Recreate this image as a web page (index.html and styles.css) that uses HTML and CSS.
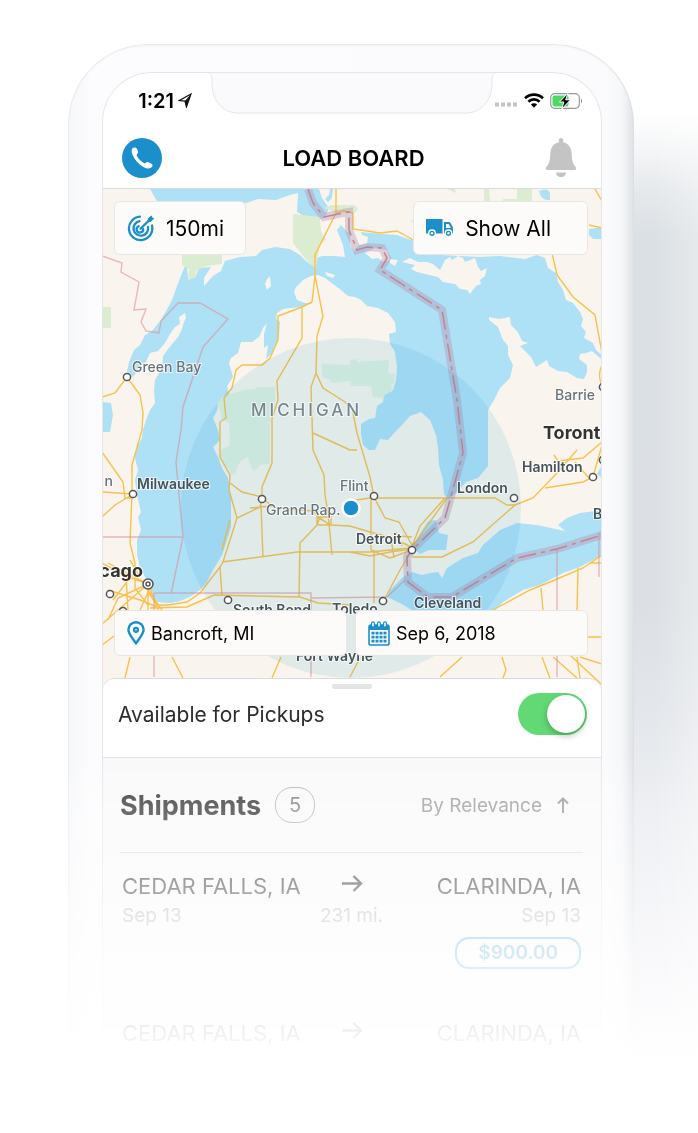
FILE: index.html
```html
<!DOCTYPE html>
<html lang="en">
<head>
<meta charset="utf-8">
<meta name="viewport" content="width=device-width, initial-scale=1">
<title>Load Board</title>
<link rel="stylesheet" href="styles.css">
</head>
<body>
<div class="stage">
  <main class="phone">
    <div class="screen">
      <div class="status">
        <div class="status-left">
          <span class="time">1:21</span>
          <svg width="14" height="15" viewBox="0 0 14 15" aria-hidden="true"><path d="M13 1 1 7.600l6 .5 1.400 5.900z" fill="none" stroke="#111" stroke-width="1.200"/><path d="M13 1 7 8.100l1.400 5.900z" fill="#111"/></svg>
        </div>
        <svg class="notch" viewBox="0 0 282 42" preserveAspectRatio="none" aria-hidden="true"><path d="M-6-1C-1-1 1 2 1 9c0 19 10 31 27 31h226c17 0 27-12 27-31 0-7 2-10 7-10" fill="#fafafc" stroke="#e3e6ea"/></svg>
        <div class="status-right">
          <svg width="24" height="18" viewBox="0 0 24 18" aria-hidden="true"><path d="M1 12.500h4M7 12.500h4M13 12.500h4M19 12.500h4" stroke="#c4c4c4" stroke-width="4"/></svg>
          <svg width="20" height="15" viewBox="0 0 20 15" aria-hidden="true"><g fill="none" stroke="#000" stroke-width="2.700"><path d="M1 5.200a13 13 0 0 1 18 0"/><path d="M4.400 8.700a8 8 0 0 1 11.200 0"/></g><path d="m10 14.800-3.100-3.200a4.400 4.400 0 0 1 6.200 0z"/></svg>
          <svg width="33" height="16" viewBox="0 0 33 16" aria-hidden="true"><rect x=".7" y=".7" width="28.600" height="14.600" rx="4" fill="#fff" stroke="#999" stroke-width="1.200"/><path d="M31 5.500q2 2.500 0 5" fill="#888"/><rect x="2.500" y="2.500" width="16" height="11" rx="2" fill="#4cd964"/><path d="M18 0 9.500 9h4.300l-2 7 8.700-9.200h-4.800z" fill="#000" stroke="#fff" stroke-width="1"/></svg>
        </div>
      </div>

      <header class="topbar">
        <button class="icon-btn call" aria-label="Call">
          <svg width="40" height="40" viewBox="0 0 40 40" aria-hidden="true"><path d="M10.800 10c1.700-1.100 3.600-.6 4.300 1l.9 2.600c.3 1-.1 1.700-.8 2.400-.6.600-.6 1.400-.1 2.300 1.500 2.700 3.700 4.900 6.500 6.700.9.500 1.600.4 2.200-.2.800-.8 1.600-1 2.600-.6l2.700 1.200c1.600.7 1.900 2.400.7 3.700-1.700 1.800-4.600 1.900-8.400-.2-5-2.800-8.900-7-11-12.300-1.100-3-1-5.300.4-6.600z" fill="#fff"/></svg>
        </button>
        <h1>LOAD BOARD</h1>
        <button class="icon-btn" aria-label="Notifications">
          <svg width="32" height="40" viewBox="0 0 32 40" aria-hidden="true"><path fill="#c4c4c4" d="M16 0c1.500 0 2.400 1 2.200 2.500L18 4.300c5.700 1.200 8.500 5.600 8.700 11.600.2 6 .8 9.300 3.900 13 1.200 1.500.8 3.100-1.100 3.100h-27C.6 32 .2 30.400 1.400 28.900c3.100-3.700 3.700-7 3.900-13C5.500 9.900 8.300 5.500 14 4.300l-.2-1.800C13.600 1 14.500 0 16 0zM11 34.500h10c0 2.500-2 4.500-5 4.500s-5-2-5-4.500z"/></svg>
        </button>
      </header>

      <section class="map" aria-label="Map">
        <svg class="map-art" viewBox="103 189 498 501" preserveAspectRatio="xMidYMin slice">
          <rect x="103" y="189" width="498" height="501" fill="#f9f5ee"/>
          <g fill="#aee0f6">
            <path d="M150 189l8 14h88l12-4 18 1 14-5 8-2-1 19 7 4 12 3 9-1 4-10-7-10-3-9z"/>
            <path d="M330 189l-1 6-4 4 3 3 4-4 1-9z"/>
            <path d="M127 371L129 362 134 350 140 345 145 335 152 331 160 321 166 311 172 300 177 286 184 268 187 264 188 280 196 276 199 268 211 267 204 278 204 286 213 276 221 271 225 261 240 257 256 256 262 250 275 247 290 249 300 255 307 262 315 267 317 258 322 256 333 256 345 257 343 245 337 230 341 225 347 232 352 231 358 232 397 235 417 242 420 254 480 257 500 256 525 259 537 255 545 258 548 268 556 273 558 282 563 290 566 300 573 303 580 312 583 319 581 326 586 332 584 338 593 343 596 350 602 355 602 360 592 351 586 353 580 354 579 359 587 365 587 372 584 379 577 378 567 372 558 371 549 366 547 360 536 367 531 357 527 353 520 346 528 343 522 341 518 332 511 325 510 317 499 319 489 317 489 320 498 327 503 340 508 346 508 355 513 365 510 378 500 388 494 400 488 410 488 466 478 478 466 482 456 493 448 500 444 494 443 480 439 465 438 448 436 435 430 420 421 412 410 416 402 425 395 432 388 440 380 439 375 450 369 450 363 445 361 434 361 424 369 419 375 418 377 406 383 402 384 395 393 390 396 380 397 367 395 352 390 344 389 334 396 332 395 322 388 313 378 308 367 306 361 300 355 297 348 296 341 290 333 284 325 278 318 275 311 276 303 280 296 287 294 292 297 300 305 303 312 303 303 307 290 308 283 309 277 313 276 319 280 322 279 336 272 353 266 359 268 345 264 348 264 334 267 323 263 328 259 337 252 342 241 342 238 353 231 358 229 363 233 377 227 386 229 394 225 400 218 404 217 411 213 418 218 430 220 440 213 447 218 457 222 468 228 478 231 497 231 527 227 540 222 555 213 570 207 582 200 590 190 597 180 601 170 603 157 602 153 595 150 587 145 577 140 567 137 555 137 540 141 530 138 517 141 512 137 495 135 480 138 470 134 455 138 445 142 438 143 430 146 420 150 410 155 403 154 390 155 380 162 368 163 356 168 349 173 343 178 337 182 329 184 322 186 318 185 313 179 317 180 324 175 327 170 334 165 343 158 351 150 353 146 362 140 367 133 377Z"/>
            <path d="M387 597l3-7 13-13 9-5 10 3 8-2 8-1 4 6 5-10 16-10 15-5 5-8 17-15 17-7 20 2 28 6-7-6 9-7 13-5 22-3v45l-22 12-17 6-23 12-17 5-20 12-10 10h-78l-15-9z"/>
            <path d="M421 532l7-11 8-1 3 13 9 2-2 15-17 0-9 4-8-7z"/>
            <path d="M103 402l8 1 2 12-3 17h-7zM539 191q9-4 11 2v7q-9 1-11-9zM589 229l13-2v12l-9 0-4-4zM597 474l5-9v13z"/>
          </g>
          <g fill="#f9f5ee">
            <path d="M402 262l8-4 8 4 9 0 6 2 7 6 5-10 5-3 2 3 6-4 5 2 2 4 10-4 3 9 3 4 6-3-2 8-5 4 1 4-5 2-6 8-3-4-7-1-5-5-12-2-5-5-13-3-8-2-6-3 4-4z"/>
            <path d="M365 253l10-5 12 2 3 10-7 2-5-4-6 1zM350 230l10 0 2 5 6 2-1 7-8 1-5 6-4-6zM390 259l8 1-3 6-5-3z"/>
            <path d="M267 279l3-3 1 10-4 4-2-6zM325 272l10 3-2 3-6-2z"/>
          </g>
          <g fill="#dcecd0">
            <path d="M293 214l27 3 1 14 5 9-6 4-4 24-8-6-15-19zM324 208l7-3h23l4 3-3 5-20-1zM182 255h40v9l-15 2-10 4-2 8-7 1 1-10-7-4zM102 307h9v21h-9zM503 205v-6h14v-10h15v16zM484 189h5l1 12-6 1zM350 208l7-1v4l-5 2zM410 222l7-5v6zM447 189h8l1 4z"/>
          </g>
          <g fill="#dff2df">
            <path d="M223 396l11-3 11-3 10-1 3-2 17 0v28l-5 2v47l-10 1-6 6-3-4-3-10-6 3-4 5-3 10-4-1-2-6-4-1-3-8-3-2 3-8 7-3 1-7-1-16-8-4v-7l-4-8z"/>
            <path d="M322 364l28 1 0-5 7-1 0 3 32-2-1 13 7 1-1 9-3 2 1 7-7 1-1 5-11-1-2-11-20 0-1-5-18 2-2-3-8-4z"/>
          </g>
          <g class="roads">
            <path d="M336 189v24l-21 42v21l8 40-6 20-1 37-5 14 2 63 11 25 1 20 3 18 4 42M316 373l7 15 22 14 7 6 5 25 13 44 4 20 11 21 14 4 13 23"/>
            <path d="M315 276l-3 26-10 5-24 9v24l-8 18-8 7h-20l-6 5-4 18-8 10 2 20-6 4v35l10 18-1 15 8 28M302 307v31l-25 43 1 19-6 18v45l-10 24v11l-2 9-23 11-7 22-7 22-3 5-20 26-13 9-19 3h-11l-9-13M261 505l2 52M222 562l38-5 37-5h73l40-4M220 567l2 28M150 608l37-1 27-12 86 2 18 6 32 2M299 597l1-54 17-18 3-8M263 499l12 9 38 3 7 7 10 7 20 1 20 6 23 6 18 9M230 483l12 9 20 5M230 520l-8 30M250 508l22-2M313 433l37 17 7 0M317 517h14v8h-14zM317 517l14 8"/>
            <path d="M350 501l20-3h125l12 7h8l18-7 24-25 20-23M515 505l-42 37-31 15h-30M447 498l-35 49M445 498l-25 28-8 20M371 498v52M374 550v53M412 550l-12 20-16 30M371 550l19 8 22-8M350 552l20 4 20-4 22-3M391 538l3 20M400 536l12 1M402 546l-6-14"/>
            <path d="M127 377l13 18 3 18-1 17-10 35v28l-2 50 5 20v25l13 17M127 377l-12 16-13 4M102 452l21 30 2 16h8M102 492l31 2-18 11-13 12M148 584l-40-21M148 584l-22-8-24-13M148 584l-30 14-10 22M148 584l-46 40M148 584v30M148 590l14 20M140 610l10-22 8 22M102 645l12-9M126 576l2 34M113 600l20-26M130 560l8 14M108 590l32 10 20 8"/>
            <path d="M336 213l8-2 9 2v16l27 4 17-2 20 11M552 253l5 22 16 22 22 18 7 38M595 189l7 12M589 225l13 3M602 365q-5 10 0 20"/>
            <path d="M545 488l38-6 10-5 9-32M554 455l4 6 25-3 19-16M575 462l14 16M602 555l-19 13-33 14-20 8-37 20M541 588l2 23M578 568l-1 43M588 637h14M590 563h12M440 677l22-20M502 657l4 13-3 8M542 657l8 21M553 657l24 21M577 657l3 21M580 657l22 7M130 657l-5 21M172 657l11 21M281 657l-9 21M360 658l-10 19M570 655l32 30"/>
          </g>
          <g class="states">
            <path d="M102 256l20 7-1 9 18 10-5 28 12-1-5 13 5 9 13 2 2-12 17-18h22l28 16-25 28-20 60-2 23-5 32 7 75-12 57M102 537h81M154 593h157v84M311 598l76-1 18-17M154 593v84M557 550v127M599 533v44"/>
          </g>
          <path class="border-band" d="M308 189l5 14 11 14 19-4 6-1v18l8 20 10-3 15 1 5 10-7 12 62 40 15 90 6 53-18 65-33 32-5 7 1 25 20 15h24l65-39 40-9 45-14"/>
          <path class="border-line" d="M308 189l5 14 11 14 19-4 6-1v18l8 20 10-3 15 1 5 10-7 12 62 40 15 90 6 53-18 65-33 32-5 7 1 25 20 15h24l65-39 40-9 45-14"/>
          <circle cx="351" cy="508" r="170" fill="#1b8fcb" fill-opacity=".11"/>
          <g class="towns">
            <circle cx="127" cy="377" r="3.600"/><circle cx="133" cy="494" r="3.600"/><circle cx="262" cy="499" r="3.600"/><circle cx="374" cy="496" r="3.600"/><circle cx="412" cy="550" r="3.600"/><circle cx="514" cy="498" r="3.600"/><circle cx="593" cy="477" r="3.600"/><circle cx="228" cy="600" r="3.600"/><circle cx="383" cy="601" r="3.600"/><circle cx="110" cy="594" r="3.600"/><circle cx="123" cy="611" r="3.600"/><circle cx="148" cy="584" r="5"/><circle cx="148" cy="584" r="2"/><circle cx="603" cy="387" r="3.600"/><circle cx="603" cy="460" r="3.600"/>
          </g>
          <g class="labels">
            <text x="132" y="372" class="soft">Green Bay</text>
            <text x="137" y="489">Milwaukee</text>
            <text x="266" y="515" class="soft">Grand Rap.</text>
            <text x="340" y="491" class="soft">Flint</text>
            <text x="356" y="544">Detroit</text>
            <text x="457" y="493">London</text>
            <text x="522" y="472">Hamilton</text>
            <text x="555" y="400" class="soft">Barrie</text>
            <text x="543" y="439" class="city">Toront</text>
            <text x="143" y="577" class="city" text-anchor="end">cago</text>
            <text x="113" y="486" class="soft" text-anchor="end">n</text>
            <text x="593" y="519">B</text>
            <text x="414" y="608">Cleveland</text>
            <text x="233" y="615">South Bend</text>
            <text x="332" y="614">Toledo</text>
            <text x="296" y="661">Fort Wayne</text>
            <text x="251" y="416" class="region">MICHIGAN</text>
          </g>
          <circle cx="351" cy="508" r="8.500" fill="#1b8fcb" stroke="#fff" stroke-width="2.500"/>
        </svg>
        <div class="map-row">
          <button class="chip chip-lg radius">
            <svg width="28" height="28" viewBox="0 0 28 28" fill="none" stroke="#1b8fcb" stroke-width="2.300" stroke-linecap="round" aria-hidden="true"><path d="M13 2.700A11.700 11.700 0 1 0 25 11.500"/><path d="M12.500 7.200A7.300 7.300 0 1 0 21 13"/><path d="m13.500 14.800 9.500-9.300"/><path d="M11.600 12.200a3.300 3.300 0 1 0 4.600 2.800"/><path d="m21 7.300.4-2.800L24.500 2l.2 2 2 .4-2.500 2.700z" fill="#1b8fcb" stroke-width="1"/></svg>
            150mi
          </button>
          <button class="chip chip-lg fleet">
            <svg width="28" height="18" viewBox="0 0 28 18" aria-hidden="true"><path d="M0 0h16.500v14.500H0zM18 3h4.500q1.500 0 2.200 1.300L27 8.500v6h-9z" fill="#1b8fcb"/><path d="M20 5h2.800l2 4H20z" fill="#fff"/><g fill="#1b8fcb" stroke="#fff" stroke-width="1.300"><circle cx="6" cy="14.300" r="3.300"/><circle cx="22.500" cy="14.300" r="3.300"/></g><circle cx="6" cy="14.300" r="1.200" fill="#fff"/><circle cx="22.500" cy="14.300" r="1.200" fill="#fff"/></svg>
            Show All
          </button>
        </div>
        <div class="map-row map-row-bottom">
          <button class="chip">
            <svg width="18" height="24" viewBox="0 0 18 24" aria-hidden="true"><path d="M9 1.300a7.500 7.500 0 0 0-7.600 7.500C1.400 13 5 16.500 9 22.300c4-5.800 7.600-9.300 7.600-13.500A7.500 7.500 0 0 0 9 1.300z" fill="none" stroke="#1b8fcb" stroke-width="2.400"/><circle cx="9" cy="8.800" r="2.300" fill="#1b8fcb" stroke="#1b8fcb" stroke-width="1.600"/><circle cx="9" cy="8.800" r=".8" fill="#fff"/></svg>
            Bancroft, MI
          </button>
          <button class="chip">
            <svg width="22" height="25" viewBox="0 0 22 25" aria-hidden="true"><path d="M2 4h18v20H2z" fill="#fff"/><path d="M1 9V5.500Q1 4 2.500 4h17Q21 4 21 5.500V9z" fill="#1b8fcb"/><rect x="1" y="4" width="20" height="20" rx="1.800" fill="none" stroke="#1b8fcb" stroke-width="1.600"/><g fill="#fff" stroke="#1b8fcb" stroke-width="1.200"><rect x="3.600" y=".8" width="2.800" height="5.400" rx="1.400"/><rect x="9.600" y=".8" width="2.800" height="5.400" rx="1.400"/><rect x="15.600" y=".8" width="2.800" height="5.400" rx="1.400"/></g><path d="M3.500 12.200h15M3.500 16.200h15M3.500 20.200h15" stroke="#1b8fcb" stroke-width="2.800" stroke-dasharray="3 1"/></svg>
            Sep 6, 2018
          </button>
        </div>
      </section>

      <section class="sheet">
        <div class="handle"></div>
        <div class="pickup">
          <label for="pickups">Available for Pickups</label>
          <input class="switch" type="checkbox" role="switch" id="pickups" checked>
        </div>
        <div class="shipments">
          <div class="ship-head">
            <h2>Shipments</h2>
            <span class="count">5</span>
            <button class="sort">By Relevance
              <svg width="12" height="16" viewBox="0 0 12 16" fill="none" stroke="currentColor" stroke-width="2" aria-hidden="true"><path d="M6 16V1.500M1 6.500l5-5 5 5"/></svg>
            </button>
          </div>
          <article class="load">
            <div class="from">CEDAR FALLS, IA<small>Sep 13</small></div>
            <div class="via"><svg width="22" height="17" viewBox="0 0 22 17" fill="none" stroke="currentColor" stroke-width="2.400" aria-hidden="true"><path d="M1 8.500h19M12.500 1l7.500 7.500-7.500 7.500"/></svg><small>231 mi.</small></div>
            <div class="to">CLARINDA, IA<small>Sep 13</small><span class="price">$900.00</span></div>
          </article>
          <article class="load">
            <div class="from">CEDAR FALLS, IA</div>
            <div class="via"><svg width="22" height="17" viewBox="0 0 22 17" fill="none" stroke="currentColor" stroke-width="2.400" aria-hidden="true"><path d="M1 8.500h19M12.500 1l7.500 7.500-7.500 7.500"/></svg></div>
            <div class="to">CLARINDA, IA</div>
          </article>
        </div>
      </section>
    </div>
  </main>
  <div class="shade"></div>
</div>
</body>
</html>
```
FILE: styles.css
```css
* { box-sizing: border-box; }

body {
  margin: 0;
  background: #fff;
  color: #000;
  font-family: Inter, "Liberation Sans", sans-serif;
}

button {
  margin: 0;
  padding: 0;
  border: 0;
  background: none;
  color: inherit;
  font: inherit;
}

svg { display: block; flex: none; }
h1, h2 { margin: 0; }

.stage {
  display: grid;
  grid-template-columns: minmax(0, 1fr) 64px;
  padding: 44px 0 72px 68px;
}

.phone {
  padding: 28px 32px 12px 34px;
  border-radius: 80px 80px 0 0;
  background: linear-gradient(90deg, #f6f7f9, #fcfcfe 24px, #fbfbfd calc(100% - 28px), #f6f7f9 calc(100% - 12px), #dfe2e6);
  box-shadow: inset 0 1px 2px #e3e5e8, inset 1px 0 1px #eceef0, inset -1px 0 1px #d8dce0;
  -webkit-mask-image: linear-gradient(#000 710px, rgba(0,0,0,.75) 760px, rgba(0,0,0,.5) 840px, rgba(0,0,0,.24) 910px, rgba(0,0,0,.08) 988px, transparent 1018px);
  mask-image: linear-gradient(#000 710px, rgba(0,0,0,.75) 760px, rgba(0,0,0,.5) 840px, rgba(0,0,0,.24) 910px, rgba(0,0,0,.08) 988px, transparent 1018px);
}

.shade {
  margin-top: 70px;
  background:
    linear-gradient(90deg, rgba(255,255,255,0) 30%, rgba(255,255,255,.3)),
    linear-gradient(#fff, #f3f5f6 4%, #e6e9ec 8%, #dbe0e4 13%, #dce0e4 52%, #e4e7eb 64%, #eef0f3 74%, #f8f8fb 88%, #fff);
}

.screen {
  overflow: hidden;
  border: 1px solid #e4e7ea;
  border-bottom: 0;
  border-radius: 50px 50px 0 0;
  background: #fff;
}

.status {
  display: grid;
  grid-template-columns: minmax(0, 1fr) 282px minmax(0, 1fr);
  height: 55px;
}
.status-left, .status-right { display: flex; align-items: center; }
.status-left { justify-content: flex-end; gap: 4px; padding-right: 19px; }
.status-right { gap: 6px; padding-left: 1px; }
.time { font-size: 20px; font-weight: 600; }
.notch { width: 100%; height: 42px; overflow: visible; }

.topbar {
  display: flex;
  align-items: center;
  justify-content: space-between;
  height: 61px;
  padding: 0 24px 0 19px;
  border-bottom: 1px solid #d9dcdf;
}
.topbar h1 { font-size: 22px; font-weight: 600; line-height: 28px; }
.call { border-radius: 50%; background: #1b8fcb; }

.map {
  display: flex;
  position: relative;
  flex-direction: column;
  justify-content: space-between;
  aspect-ratio: 498 / 501;
  padding: 12px 13px 34px 11px;
  overflow: hidden;
}
.map-art { position: absolute; inset: 0; width: 100%; height: 100%; }
.roads { fill: none; stroke: #f9c14b; stroke-width: 1.4; }
.states { fill: none; stroke: #dc8f96; stroke-opacity: .6; stroke-width: 1.4; }
.border-band { fill: none; stroke: #b48fae; stroke-opacity: .38; stroke-width: 8; }
.border-line { fill: none; stroke: #c8828c; stroke-width: 1.5; stroke-dasharray: 18 5 4 5; }
.towns { fill: #fff; stroke: #555; stroke-width: 1.5; }
.labels {
  fill: #46525a;
  stroke: rgba(255,255,255,.7);
  stroke-width: 2;
  paint-order: stroke;
  font-size: 14px;
  font-weight: 600;
}
.labels .soft { fill: #69747a; font-weight: 500; }
.labels .city { fill: #333; font-size: 18px; font-weight: 700; }
.labels .region { fill: #75878e; font-size: 17px; font-weight: 500; letter-spacing: 3px; }

.map-row { display: flex; position: relative; justify-content: space-between; gap: 8px; }
.map-row-bottom { display: grid; grid-template-columns: 1fr 1fr; }
.chip {
  display: flex;
  align-items: center;
  gap: 6px;
  height: 46px;
  padding: 0 12px;
  border: 1px solid #e6e6e4;
  border-radius: 6px;
  background: #fcfbfa;
  font-size: 18px;
  white-space: nowrap;
}
.chip-lg { gap: 11px; height: 54px; font-size: 21px; }
.radius { padding-right: 21px; }
.fleet { padding-right: 36px; }

.sheet {
  position: relative;
  margin-top: -12px;
  padding-top: 5px;
  border-top: 1px solid #d9dcdf;
  border-radius: 12px 12px 0 0;
  background: #fff;
}
.handle { width: 40px; height: 5px; margin: 0 auto; border-radius: 2px; background: #e4e4e4; }
.pickup {
  display: flex;
  align-items: center;
  justify-content: space-between;
  padding: 4px 14px 22px 15px;
  border-bottom: 1px solid #e3e4e6;
  color: #2d2d2d;
  font-size: 21px;
}
.switch {
  position: relative;
  width: 69px;
  height: 42px;
  margin: 0;
  border-radius: 21px;
  appearance: none;
  background: #62d975;
}
.switch::before {
  content: "";
  position: absolute;
  top: 2px;
  right: 2px;
  width: 38px;
  height: 38px;
  border-radius: 50%;
  background: #fff;
  box-shadow: 0 3px 6px rgba(0,0,0,.25);
}

.shipments { padding: 0 18px 0 17px; background: #f9f9fa; }
.ship-head {
  display: flex;
  align-items: center;
  height: 95px;
  border-bottom: 1px solid #dcdcdc;
}
.ship-head h2 { color: #333; font-size: 27px; font-weight: 700; }
.count {
  display: grid;
  place-items: center;
  width: 40px;
  height: 36px;
  margin-left: 14px;
  border: 1px solid #b5b5b5;
  border-radius: 17px;
  color: #808080;
  font-size: 20px;
}
.sort {
  display: flex;
  align-items: center;
  gap: 15px;
  margin-left: auto;
  padding-right: 14px;
  color: #9a9a9a;
  font-size: 19px;
}
.load {
  display: grid;
  grid-template-columns: 180px 1fr 180px;
  min-height: 147px;
  padding: 19px 2px 0;
  border-bottom: 1px solid #ececec;
  color: #444;
  font-size: 22px;
  line-height: 28px;
  white-space: nowrap;
}
.load:last-child { min-height: 49px; border: 0; }
.load small { display: block; margin-top: 2px; color: #b8b8b8; font-size: 19px; line-height: 28px; }
.via { display: flex; flex-direction: column; align-items: center; padding-top: 3px; }
.via small { margin-top: 10px; }
.to { text-align: right; }
.price {
  display: inline-block;
  margin-top: 7px;
  padding: 0 21px;
  border: 2px solid #4fb0de;
  border-radius: 14px;
  color: #4fb0de;
  font-size: 19px;
  font-weight: 600;
}
```
